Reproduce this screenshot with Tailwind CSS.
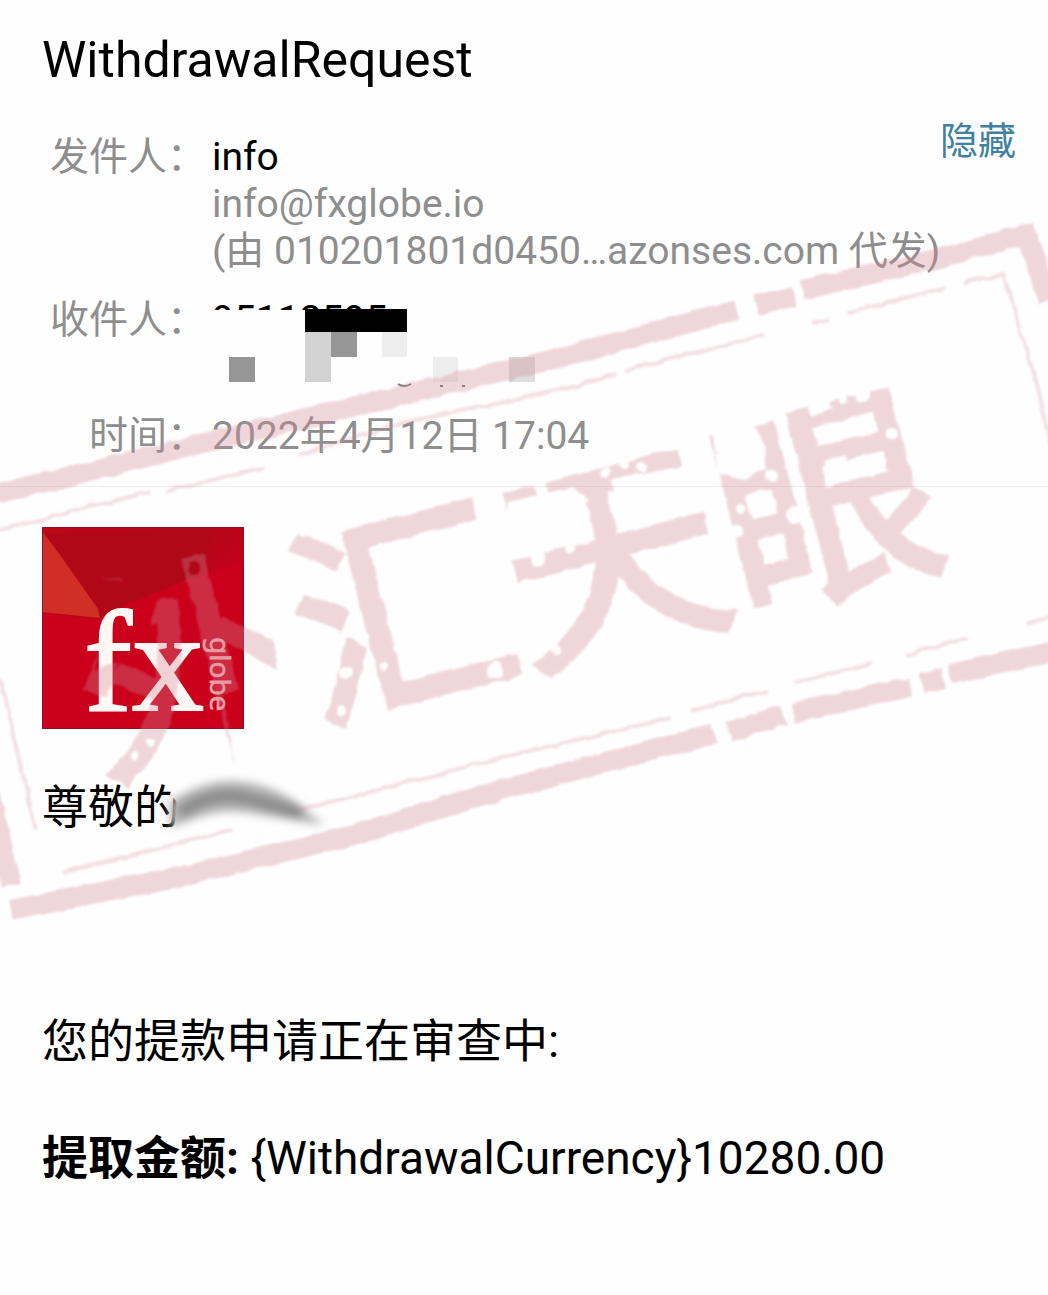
<!DOCTYPE html>
<html lang="zh-CN">
<head>
<meta charset="utf-8">
<meta name="viewport" content="width=device-width, initial-scale=1">
<title>WithdrawalRequest</title>
<script src="https://cdn.jsdelivr.net/npm/@tailwindcss/browser@4"></script>
</head>
<body class="min-h-screen bg-[#fefefe] font-[Roboto,'Noto_Sans_CJK_SC',sans-serif] text-black">
<div class="relative min-h-screen overflow-hidden">
  <header class="border-b border-[#ececec] pt-8 pb-[26px]">
    <h1 class="pl-[42px] text-[50px] leading-[56px]">WithdrawalRequest</h1>
    <div class="relative mt-[46px]">
      <button type="button" class="absolute -top-4 right-8 text-[38px] leading-[47px] text-[#41819f]">隐藏</button>
      <dl class="grid grid-cols-[206px_1fr] gap-x-[6px] text-[39px] leading-[47px] text-[#8e8e8e]">
        <dt class="text-right">发件人：</dt>
        <dd>
          <p class="text-black">info</p>
          <p>info@fxglobe.io</p>
          <p>(由 010201801d0450…azonses.com 代发)</p>
        </dd>
        <dt class="mt-[22px] text-right">收件人：</dt>
        <dd class="relative mt-[22px] h-[94px]">
          <div class="h-[13px] overflow-hidden text-black">95113595</div>
          <svg class="absolute top-0 left-0" width="340" height="94" viewBox="212 297 340 94" aria-hidden="true">
            <path fill="#000" d="M305 309h102v23H305z"/>
            <path fill="#d2d2d2" d="M305 332h26v50h-26z"/>
            <path fill="#969696" d="M331 332h26v25h-26zM229 357h26v25h-26z"/>
            <path fill="#eee" d="M382 332h25v25h-25zM433 357h25v25h-25z"/>
            <path fill="#dedede" d="M509 357h26v25h-26z"/>
            <path fill="none" stroke="#777" stroke-width="2" d="M398 384q6 4 13 0M440 386h3M462 386h3"/>
          </svg>
        </dd>
        <dt class="mt-[22px] text-right">时间：</dt>
        <dd class="mt-[22px]">2022年4月12日 17:04</dd>
      </dl>
    </div>
  </header>

  <main class="px-[42px] pt-10 text-[46px] leading-[60px]">
    <svg class="block" width="202" height="202" viewBox="0 0 202 202" role="img" aria-label="fx globe">
      <defs>
        <linearGradient id="red" x1="0" y1="0" x2="1" y2="1"><stop offset="0" stop-color="#bd0717"/><stop offset=".4" stop-color="#b00817"/><stop offset=".62" stop-color="#c9001b"/><stop offset="1" stop-color="#d1001c"/></linearGradient>
      </defs>
      <path fill="url(#red)" d="M0 0h202v202H0z"/>
      <path fill="#cb001b" d="M0 86l56 6 34-18 80-30 32-8v166H0z"/>
      <path fill="#b00817" d="M3 6h168l-14 40-62 28-38 4z"/>
      <path fill="#d12e26" d="M0 4l18 24 38 54 2 9-58-6z"/>
      <path fill="none" stroke="#861530" d="M.5.5h201v201H.5z"/>
      <text x="42" y="183" fill="#fff8f5" stroke="#fff8f5" stroke-width="2" font-family="Liberation Serif" font-size="144">fx</text>
      <text transform="translate(168 110) rotate(90)" fill="#f3a5ab" stroke="#f3a5ab" stroke-width=".6" font-family="Noto Sans" font-size="28">globe</text>
    </svg>
    <div class="relative mt-12">
      <p>尊敬的</p>
      <svg class="absolute top-0 left-[120px] overflow-visible" width="200" height="64" viewBox="162 776 200 64" aria-hidden="true">
        <defs><filter id="soft" x="-20%" y="-50%" width="140%" height="200%"><feGaussianBlur stdDeviation="4"/></filter></defs>
        <path fill="#fefefe" d="M172 784l-2 10 8 8-2 34h20v-60z"/>
        <g filter="url(#soft)">
          <path fill="#b4b4b4" d="M170 800q36-22 66-20t56 18l32 26-52-8q-30-6-48-5t-54 16z"/>
          <path fill="none" stroke="#8c8c8c" stroke-width="13" d="M180 812q34-24 70-14t52 14"/>
        </g>
      </svg>
    </div>
    <p class="mt-[174px]">您的提款申请正在审查中:</p>
    <p class="mt-[57px]"><strong class="font-bold">提取金额:</strong> {WithdrawalCurrency}10280.00</p>
  </main>

  <svg class="pointer-events-none absolute top-0 left-0" width="1048" height="1295" viewBox="0 0 1048 1295" aria-hidden="true">
    <defs>
      <filter id="rough" x="-40" y="0" width="1128" height="1295" filterUnits="userSpaceOnUse">
        <feTurbulence type="fractalNoise" baseFrequency=".06" numOctaves="2" seed="4"/>
        <feDisplacementMap in="SourceGraphic" scale="6" xChannelSelector="R" yChannelSelector="G"/>
        <feGaussianBlur stdDeviation="1"/>
      </filter>
      <mask id="wear" maskUnits="userSpaceOnUse" x="0" y="0" width="1048" height="1295">
        <path fill="#fff" d="M0 0h1048v1295H0z"/>
        <g fill="#000">
          <path d="M712 428l30-8 14 8 10 20-4 18-18 14-26-6zM508 502l66-14 14 14-14 10-66 8zM612 480l80-16v20l-78 14zM532 470l12-2 4 26-12 3z"/>
          <path d="M826 460l18-6 8 14-12 16-16 2zM807 406l20-6 6 8-20 8zM222 694l26-6 30 90-40 6zM270 630l40 20-16 40-16-14z"/>
          <path d="M282 590l22 6 -10 20 -18-6zM100 580h60l-14 70-50 20z"/>
          <circle cx="384" cy="666" r="4"/><circle cx="495" cy="670" r="8"/><circle cx="346" cy="673" r="7"/>
          <circle cx="328" cy="692" r="4"/><circle cx="342" cy="711" r="5"/><circle cx="605" cy="473" r="5"/>
          <circle cx="625" cy="463" r="5"/><circle cx="570" cy="548" r="5"/><circle cx="538" cy="559" r="8"/>
          <circle cx="892" cy="434" r="6"/><circle cx="842" cy="401" r="4"/>
          <circle cx="795" cy="515" r="8"/><circle cx="772" cy="475" r="6"/><circle cx="742" cy="508" r="5"/><circle cx="738" cy="531" r="6"/>
          <circle cx="863" cy="395" r="7"/><circle cx="641" cy="468" r="5"/><circle cx="556" cy="650" r="5"/>
          <circle cx="135" cy="755" r="4"/><circle cx="150" cy="742" r="4"/><circle cx="194" cy="568" r="6"/>
        </g>
      </mask>
    </defs>
    <g filter="url(#rough)" opacity=".33" fill="#d28896" stroke="#d28896">
      <g fill="none" stroke-width="20">
        <path d="M-15 496L33 485 306 418 550 360 737 310M757 306l37-10M802 290L948 256M948 256L1026 234 1048 300"/>
        <path d="M10 910L183 876 350 836 500 790 714 734M729 732l54-17M793 713L910 687M922 684l22-6M950 674L1060 650M-14 780L12 886"/>
      </g>
      <g fill="none" stroke-width="4" stroke-opacity=".75">
        <path d="M0 530L150 492M165 492L264 467M298 455L402 423 524 398 617 375M627 370L764 335M812 324l18-4M847 313L944 288M964 283l40-10 31 107 16 66"/>
        <path d="M0 680l36 150M63 872L233 830M300 810L500 758 670 718M692 710l75-19M795 682l77-18M905 655l63-17M1027 624l24-8"/>
      </g>
      <g mask="url(#wear)">
        <text transform="translate(101 774) rotate(-14.5)" stroke-width="6" font-family="Noto Sans CJK SC" font-size="220">外汇天眼</text>
      </g>
    </g>
  </svg>
</div>
</body>
</html>
